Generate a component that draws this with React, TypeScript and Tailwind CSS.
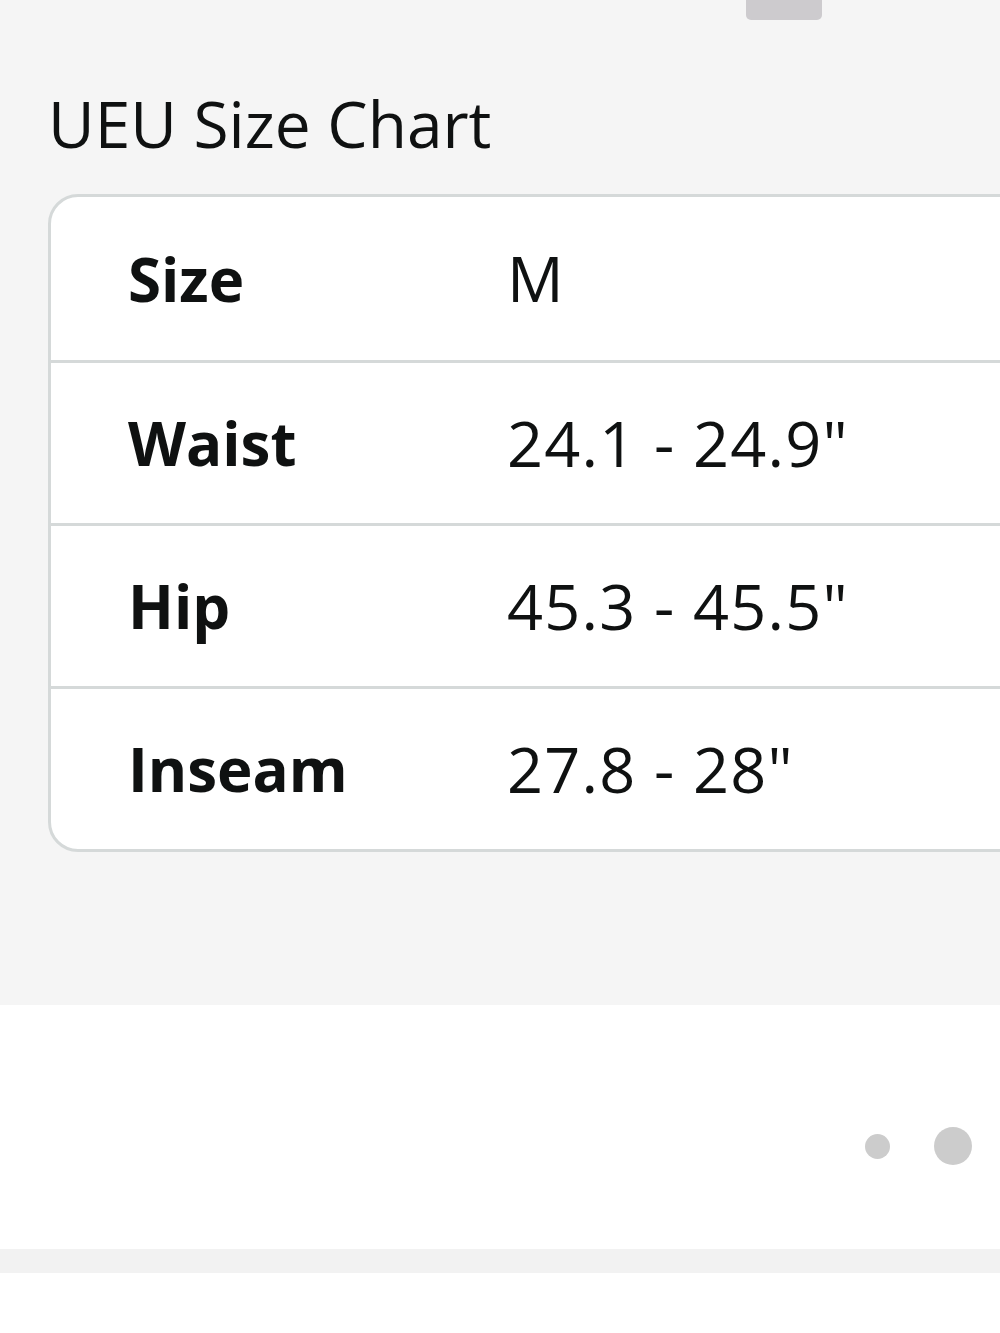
const ROWS = [
  { label: "Size", value: "M" },
  { label: "Waist", value: '24.1 - 24.9"' },
  { label: "Hip", value: '45.3 - 45.5"' },
  { label: "Inseam", value: '27.8 - 28"' },
];

export default function App() {
  return (
    <div
      className="w-[1000px] h-[1333px] overflow-hidden bg-white text-[#0f1111]"
      style={{ fontFamily: '"Open Sans", "Noto Sans", sans-serif' }}
    >
      {/* size chart panel */}
      <section className="h-[1005px] bg-[#f5f5f5] overflow-hidden">
        <div className="flex pl-[746px]">
          <div className="w-[76px] h-[20px] bg-[#cdcbce] rounded-b-[5px]" />
        </div>
        <h2 className="pl-[48px] mt-[66px] text-[64px] leading-[76px] font-normal">UEU Size Chart</h2>
        <div className="pl-[48px] mt-[32px]">
          <div className="w-[1100px] bg-white border-[3px] border-[#d5d9d9] rounded-[30px] overflow-hidden">
            {ROWS.map((row, i) => (
              <div
                key={row.label}
                className={`flex items-center h-[163px] ${i > 0 ? "border-t-[3px] border-[#d5d9d9]" : ""}`}
              >
                <div className="w-[456px] pl-[77px] text-[60px] font-bold">{row.label}</div>
                <div className="text-[63px] tracking-[1.2px] font-normal">{row.value}</div>
              </div>
            ))}
          </div>
        </div>
      </section>

      {/* carousel dots */}
      <div className="h-[244px] flex items-center justify-end gap-[44px] pr-[28px] pt-[38px]">
        <div className="w-[25px] h-[25px] rounded-full bg-[#cccccc]" />
        <div className="w-[38px] h-[38px] rounded-full bg-[#cccccc]" />
      </div>
      <div className="h-[24px] bg-[#f2f2f2]" />
    </div>
  );
}
